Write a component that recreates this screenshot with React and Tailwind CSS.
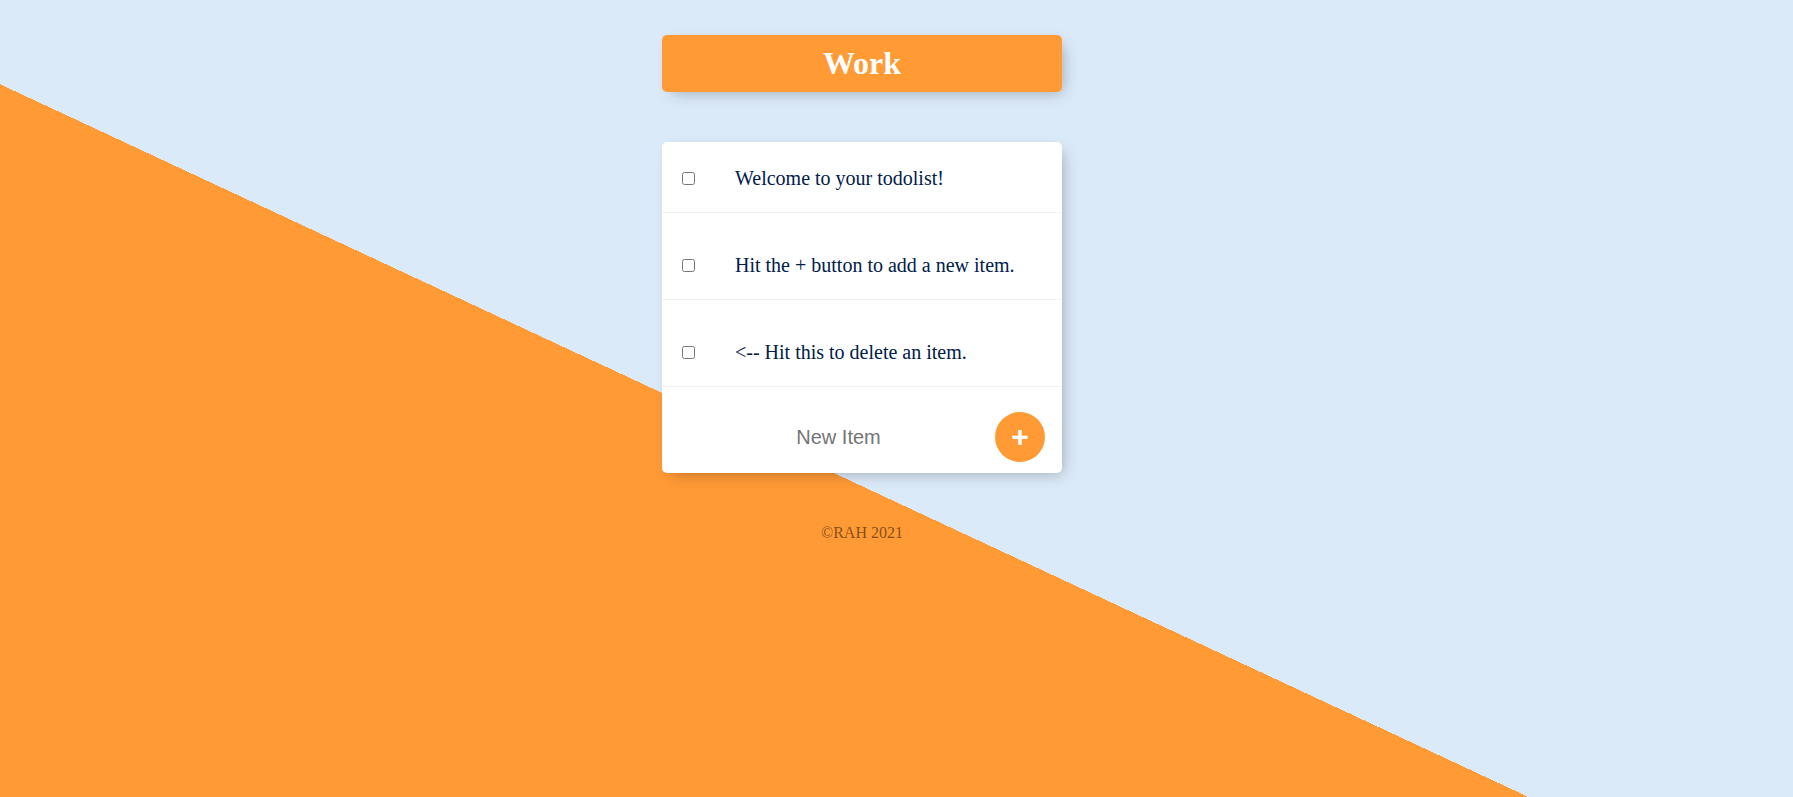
import React, { useState } from "react";

const items = [
  { id: 1, text: "Welcome to your todolist!", first: true },
  { id: 2, text: "Hit the + button to add a new item." },
  { id: 3, text: "<-- Hit this to delete an item." },
];

const App = () => {
  const [newItem, setNewItem] = useState("");
  const [checked, setChecked] = useState({});

  return (
    <div className="min-h-screen w-full bg-[linear-gradient(25deg,#ff9a35_646px,#dbeaf9_646px)] font-['Liberation_Serif',serif]">
      <div className="pr-[69px] pt-[35px]">
        {/* Heading */}
        <div className="mx-auto w-[400px] rounded-[5px] bg-[#ff9a35] text-center shadow-[5px_5px_15px_-5px_rgba(0,0,0,0.3)]">
          <h1 className="p-[10px] text-[32px] font-bold leading-[37px] text-white">
            Work
          </h1>
        </div>

        {/* List */}
        <div className="mx-auto mt-[50px] w-[400px] rounded-[5px] bg-white shadow-[5px_5px_15px_-5px_rgba(0,0,0,0.3)]">
          {items.map((item) => (
            <div
              key={item.id}
              className={`flex items-center border-b border-[#f1f1f1] ${
                item.first ? "h-[71px] pt-[2px]" : "h-[87px] pt-[19px]"
              }`}
            >
              <input
                type="checkbox"
                checked={!!checked[item.id]}
                onChange={() =>
                  setChecked((prev) => ({ ...prev, [item.id]: !prev[item.id] }))
                }
                className="m-[20px] h-[13px] w-[13px]"
              />
              <p
                className={`p-[20px] text-[20px] leading-[23px] text-[#00204a] ${
                  checked[item.id] ? "line-through decoration-[#ff9a35]" : ""
                }`}
              >
                {item.text}
              </p>
            </div>
          ))}

          {/* New item form */}
          <form
            className="ml-[20px] flex h-[86px] items-center pt-[14px]"
            onSubmit={(e) => {
              e.preventDefault();
              setNewItem("");
            }}
          >
            <input
              type="text"
              value={newItem}
              onChange={(e) => setNewItem(e.target.value)}
              placeholder="New Item"
              autoComplete="off"
              className="h-[60px] w-[313px] bg-transparent text-center font-['Liberation_Sans',Arial,sans-serif] text-[20px] text-[#00204a] outline-none placeholder:text-[#757575]"
            />
            <button
              type="submit"
              className="flex h-[50px] w-[50px] items-center justify-center rounded-full bg-[#ff9a35] font-['Liberation_Sans',Arial,sans-serif] text-[30px] font-bold leading-none text-white"
            >
              +
            </button>
          </form>
        </div>

        {/* Footer */}
        <footer className="mt-[48px] text-center text-[16px] text-black/50">
          ©RAH 2021
        </footer>
      </div>
    </div>
  );
};

export default App;
